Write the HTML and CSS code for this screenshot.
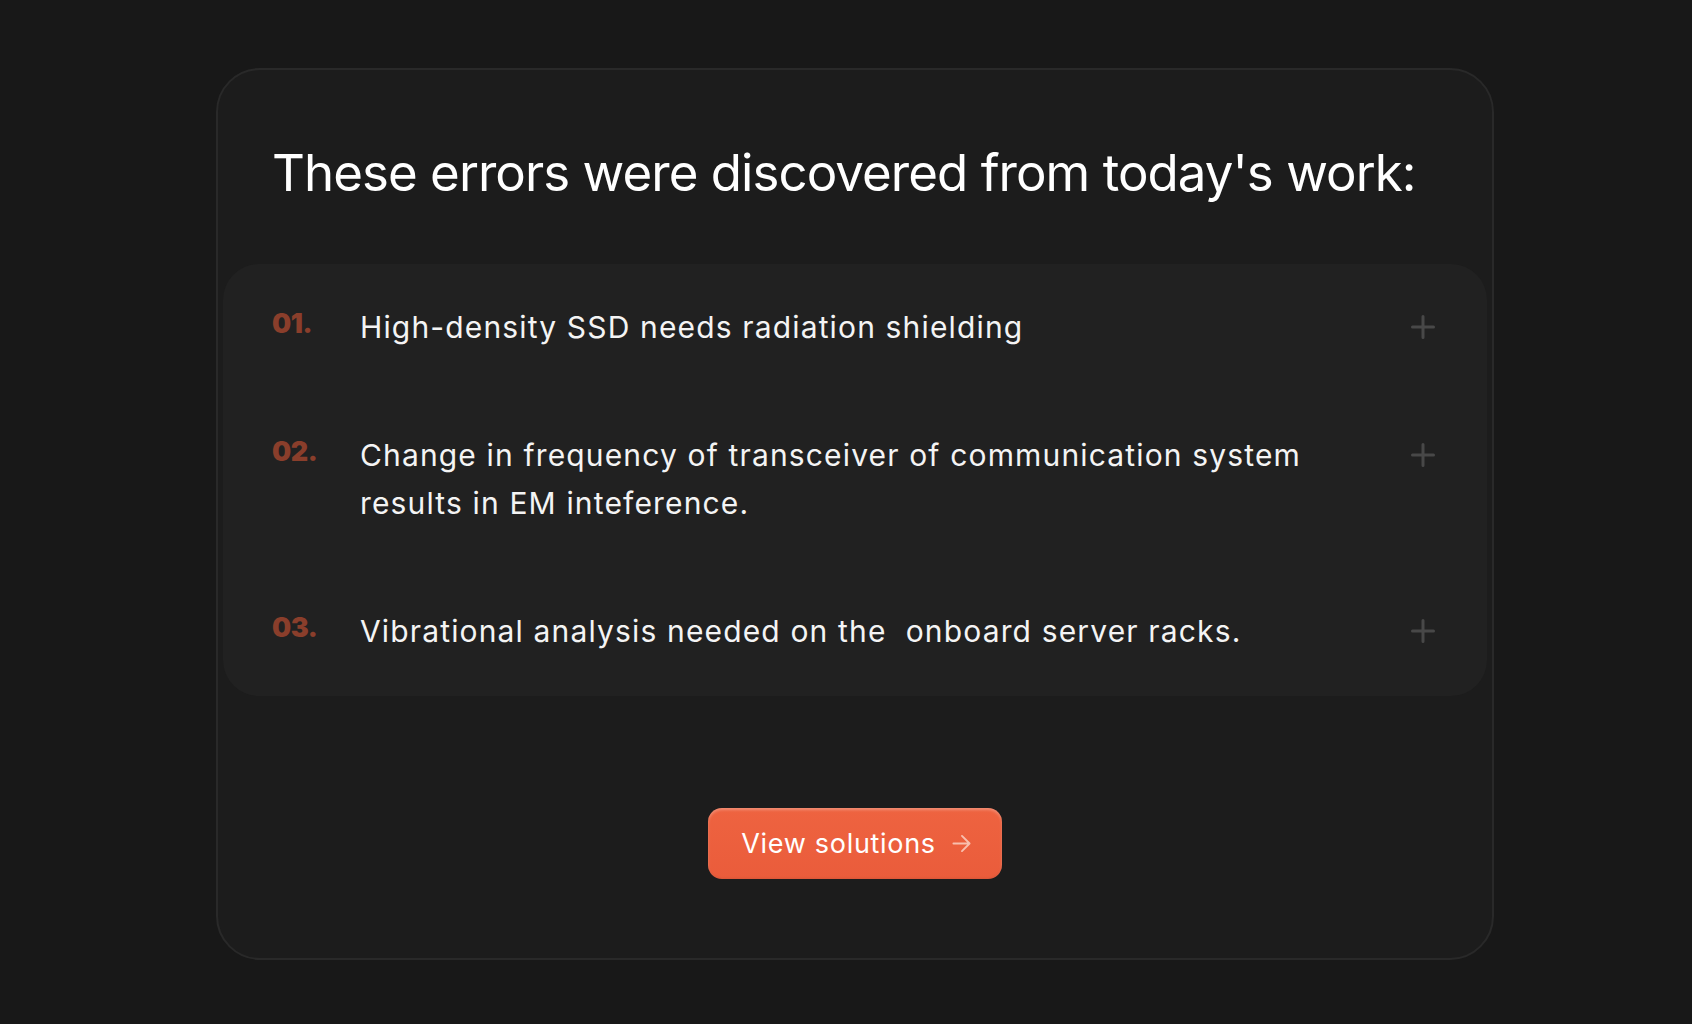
FILE: index.html
```html
<!DOCTYPE html>
<html lang="en">
<head>
<meta charset="utf-8">
<title>Errors</title>
<link rel="stylesheet" href="styles.css">
</head>
<body>
<div class="page">
  <section class="card">
    <h1 class="title">These errors were discovered from today's work:</h1>
    <ol class="list">
      <li class="item">
        <span class="num">01.</span>
        <p class="text">High-density SSD needs radiation shielding</p>
        <svg class="plus" viewBox="0 0 24 24" width="24" height="24"><path d="M12 1.5V22.5M1.5 12H22.5" stroke="#484848" stroke-width="3" stroke-linecap="round" fill="none"/></svg>
      </li>
      <li class="item">
        <span class="num">02.</span>
        <p class="text">Change in frequency of transceiver of communication system results in EM inteference.</p>
        <svg class="plus" viewBox="0 0 24 24" width="24" height="24"><path d="M12 1.5V22.5M1.5 12H22.5" stroke="#484848" stroke-width="3" stroke-linecap="round" fill="none"/></svg>
      </li>
      <li class="item">
        <span class="num">03.</span>
        <p class="text">Vibrational analysis needed on the&nbsp; onboard server racks.</p>
        <svg class="plus" viewBox="0 0 24 24" width="24" height="24"><path d="M12 1.5V22.5M1.5 12H22.5" stroke="#484848" stroke-width="3" stroke-linecap="round" fill="none"/></svg>
      </li>
    </ol>
    <div class="actions">
      <button class="btn">View solutions
        <svg class="arrow" viewBox="0 0 20 20" width="20" height="20"><path d="M1.5 10H18.5M10.5 2L18.5 10L10.5 18" stroke="#f8bfae" stroke-width="2" stroke-linecap="round" stroke-linejoin="round" fill="none"/></svg>
      </button>
    </div>
  </section>
</div>
</body>
</html>
```
FILE: styles.css
```css
* { box-sizing: border-box; }
html, body { margin: 0; padding: 0; }
body {
  background: #181818;
  font-family: Inter, "Noto Sans", sans-serif;
  color: #ffffff;
  width: 1692px;
  height: 1024px;
  overflow: hidden;
}
.page {
  padding: 68px 0 0 216px;
}
.card {
  width: 1278px;
  height: 892px;
  background: #1c1c1c;
  border: 2px solid #292929;
  border-radius: 44px;
  padding: 0 5px;
  display: flex;
  flex-direction: column;
}
.title {
  margin: 71px 0 0 49px;
  font-size: 51px;
  font-weight: 400;
  line-height: 63px;
  letter-spacing: -0.95px;
  color: #ffffff;
  white-space: nowrap;
}
.list {
  list-style: none;
  margin: 60px 0 0 0;
  padding: 0 52px 0 49px;
  background: #212121;
  border-radius: 36px;
  height: 432px;
}
.item {
  display: flex;
  align-items: flex-start;
  padding: 39px 0 41px;
}
.num {
  width: 88px;
  flex: none;
  font-size: 27px;
  font-weight: 900;
  color: #8a3e2b;
  line-height: 27px;
  margin-top: 7px;
  letter-spacing: -0.5px;
}
.text {
  margin: 0;
  width: 1000px;
  font-size: 30px;
  line-height: 48px;
  font-weight: 400;
  color: #f4f4f4;
  letter-spacing: 1.15px;
}
.plus {
  margin-left: auto;
  margin-top: 12px;
  flex: none;
}
.actions {
  display: flex;
  justify-content: center;
  margin-top: 112px;
}
.btn {
  width: 294px;
  height: 71px;
  border: none;
  border-radius: 14px;
  background: linear-gradient(#ee6340, #ea5c3b);
  box-shadow: inset 0 2px 3px rgba(255,255,255,0.28), inset 0 -1px 2px rgba(0,0,0,0.08);
  color: #ffffff;
  font-family: Inter, "Noto Sans", sans-serif;
  font-size: 27px;
  font-weight: 400;
  letter-spacing: 0.7px;
  display: flex;
  align-items: center;
  justify-content: center;
  gap: 16px;
  padding: 0 0 0 2px;
  cursor: pointer;
}
.arrow { flex: none; width: 19px; height: 19px; }
```
